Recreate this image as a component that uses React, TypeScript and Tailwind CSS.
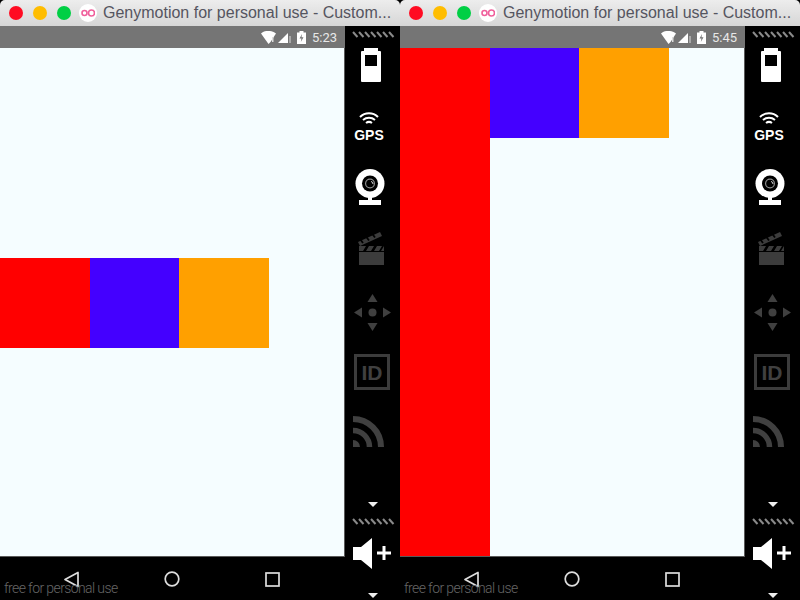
import React from 'react';

const Dots: React.FC<{ className: string }> = ({ className }) => (
  <svg className={className} width="43" height="7" viewBox="0 0 43 7">
    {[0, 6, 12, 18, 24, 30, 36].map((x) => (
      <line key={x} x1={x + 1} y1="1" x2={x + 5.5} y2="6" stroke="#8a8a8a" strokeWidth="2" />
    ))}
  </svg>
);

const Caret: React.FC<{ className: string }> = ({ className }) => (
  <svg className={className} width="10" height="5" viewBox="0 0 10 5">
    <path d="M0 0h10L5 5z" fill="#eee" />
  </svg>
);

const Sidebar: React.FC = () => (
  <div className="w-[55px] bg-black flex flex-col shrink-0">
    <Dots className="block mt-[5px] ml-[7px]" />
    {/* Battery */}
    <svg className="block mt-[10px] ml-[16px]" width="20" height="34" viewBox="0 0 20 34">
      <path d="M3 0h14v3h2a1 1 0 0 1 1 1v29a1 1 0 0 1-1 1H1a1 1 0 0 1-1-1V4a1 1 0 0 1 1-1h2z" fill="#fff" />
      <rect x="4" y="7" width="12" height="11" fill="#000" />
    </svg>
    {/* GPS */}
    <div className="mt-[30px] ml-[8px] w-[32px] flex flex-col items-center">
      <svg className="block" width="20" height="13" viewBox="0 0 20 13" fill="none" stroke="#fff" strokeWidth="2">
        <path d="M1 5c5-5 13-5 18 0" />
        <path d="M4 8c3.500-3 8.500-3 12 0" />
        <path d="M7 11c2-1.500 4-1.500 6 0" />
      </svg>
      <span className="font-['Liberation_Sans',sans-serif] font-bold text-white text-[14px] leading-[14px] mt-[3px]">GPS</span>
    </div>
    {/* Webcam */}
    <svg className="block mt-[27px] ml-[10px]" width="30" height="36" viewBox="0 0 30 36">
      <circle cx="15" cy="14.500" r="14.500" fill="#fff" />
      <circle cx="15" cy="14.500" r="8" fill="#000" />
      <circle cx="15" cy="14.500" r="5" fill="#8c8c8c" />
      <circle cx="15" cy="14.500" r="3.800" fill="#000" />
      <path d="M16 12.500a2.500 2.500 0 0 1 2 2.500" fill="none" stroke="#ddd" strokeWidth="1" />
      <rect x="13" y="28" width="4" height="4" fill="#fff" />
      <rect x="4" y="31" width="22" height="5" fill="#fff" />
    </svg>
    {/* Clapper */}
    <svg className="block mt-[27px] ml-[12px]" width="28" height="33" viewBox="0 0 28 33">
      <path d="M1 10 23 0l2 4L3 14z" fill="#3c3c3c" />
      <path d="m6 11-3-4M12 8.500 9 4.500M18 5.500l-3-4" stroke="#000" strokeWidth="1.800" />
      <path d="M2 14h25v5H2z" fill="#3c3c3c" />
      <path d="M6 19l3-5h3l-3 5zM14 19l3-5h3l-3 5zM22 19l3-5h2l-3 5z" fill="#000" />
      <path d="M2 20h25v13H2z" fill="#3c3c3c" />
    </svg>
    {/* D-pad */}
    <svg className="block mt-[29px] ml-[9px]" width="37" height="37" viewBox="0 0 37 37">
      <g fill="#404040">
        <path d="M18.500 0l5 8h-10z" />
        <path d="M18.500 37l-5-8h10z" />
        <path d="M0 18.500l8-5v10z" />
        <path d="M37 18.500l-8-5v10z" />
        <circle cx="18.500" cy="18.500" r="4" />
      </g>
    </svg>
    {/* ID */}
    <div className="mt-[23px] ml-[9px] w-[36px] h-[36px] border-[3px] border-[#3c3c3c] flex items-center justify-center">
      <span className="font-['Liberation_Sans',sans-serif] font-bold text-[#404040] text-[21px] leading-none">ID</span>
    </div>
    {/* RSS */}
    <svg className="block mt-[26px] ml-[8px]" width="32" height="31" viewBox="0 0 32 31" fill="none" stroke="#404040">
      <path d="M0 3a28 28 0 0 1 28 28" strokeWidth="6" />
      <path d="M0 14.500A16.500 16.500 0 0 1 16.500 31" strokeWidth="5.500" />
      <path d="M0 24a7 7 0 0 1 7 7H0z" fill="#404040" stroke="none" />
    </svg>
    <Caret className="block mt-[55px] ml-[23px]" />
    <Dots className="block mt-[11px] ml-[7px]" />
    {/* Volume up */}
    <svg className="block mt-[13px] ml-[8px]" width="39" height="31" viewBox="0 0 39 31">
      <path d="M0 9h8L19 0v31L8 22H0z" fill="#fff" />
      <path d="M24 13.500h5.500V8h3v5.500H38v3h-5.500V22h-3v-5.500H24z" fill="#fff" />
    </svg>
    <Caret className="block mt-[24px] ml-[23px]" />
  </div>
);

const StatusBar: React.FC<{ time: string }> = ({ time }) => (
  <div className="h-[22px] bg-[#757575] flex items-center justify-end pr-[8px] shrink-0">
    <svg width="15" height="13" viewBox="0 0 15 13">
      <path d="M0 2.500C4-1 10-1 15 2.500L9.500 11 7.500 13z" fill="#fff" />
      <rect x="11" y="6" width="1.500" height="5" fill="#ddd" />
    </svg>
    <svg className="ml-[2px]" width="13" height="12" viewBox="0 0 13 12">
      <path d="M0 12 10 2v10z" fill="#fff" />
      <rect x="11.500" y="5" width="1" height="7" fill="#ddd" />
    </svg>
    <svg className="ml-[6px]" width="9" height="13" viewBox="0 0 9 13">
      <path d="M2.500 0h4v1.500H9V13H0V1.500h2.500z" fill="#fff" />
      <path d="M5 3 2.500 7.500h2L3.800 11 6.500 6.300h-2z" fill="#757575" />
    </svg>
    <span className="ml-[6px] font-['Roboto',sans-serif] text-[13px] text-[#e8e8e8] leading-none">{time}</span>
  </div>
);

const NavBar: React.FC = () => (
  <div className="relative h-[43px] bg-black shrink-0">
    <div className="h-full flex items-center pt-[1px]">
      <svg className="ml-[63px]" width="17" height="17" viewBox="0 0 17 17" fill="none" stroke="#ddd" strokeWidth="1.700">
        <path d="M15 1.500v14L2 8.500z" strokeLinejoin="round" />
      </svg>
      <svg className="ml-[84px]" width="16" height="16" viewBox="0 0 16 16" fill="none" stroke="#ddd" strokeWidth="1.700">
        <circle cx="8" cy="8" r="6.800" />
      </svg>
      <svg className="ml-[85px]" width="15" height="15" viewBox="0 0 15 15" fill="none" stroke="#ddd" strokeWidth="1.700">
        <rect x="1" y="1" width="13" height="13" />
      </svg>
    </div>
    <span className="absolute left-[4px] bottom-[5px] font-['Roboto',sans-serif] font-light text-[14px] tracking-[-0.6px] leading-none text-[#666666]">
      free for personal use
    </span>
  </div>
);

const Box: React.FC<{ className: string }> = ({ className }) => (
  <div className={`w-[89.6px] h-[89.6px] ${className}`} />
);

const GenyWindow: React.FC<{ time: string; children: React.ReactNode }> = ({ time, children }) => (
  <div className="w-[400px] h-[600px] flex flex-col overflow-hidden rounded-t-[5px] bg-black">
    {/* Title bar */}
    <div className="h-[26px] shrink-0 bg-gradient-to-b from-[#ededed] to-[#d6d6d6] flex items-center pl-[9px]">
      <div className="w-[14px] h-[14px] rounded-full bg-[#ff0b22]" />
      <div className="w-[14px] h-[14px] rounded-full bg-[#ffbd00] ml-[10px]" />
      <div className="w-[14px] h-[14px] rounded-full bg-[#00cf44] ml-[10px]" />
      <div className="w-[18px] h-[18px] rounded-full bg-white ml-[8px] flex items-center justify-center">
        <svg width="14" height="8" viewBox="0 0 14 8" fill="none" stroke="#f0609c" strokeWidth="1.600">
          <circle cx="3.500" cy="4" r="2.500" />
          <circle cx="10.500" cy="4" r="3" />
        </svg>
      </div>
      <span className="ml-[6px] font-['Liberation_Sans',sans-serif] text-[16px] text-[#555560] whitespace-nowrap">
        Genymotion for personal use - Custom...
      </span>
    </div>
    <div className="flex-1 flex min-h-0">
      <div className="w-[345px] flex flex-col shrink-0">
        <StatusBar time={time} />
        <div className="flex-1 flex bg-[#f5fdff] border-r border-[#5a5a5a] border-b min-h-0">{children}</div>
        <NavBar />
      </div>
      <Sidebar />
    </div>
  </div>
);

const App: React.FC = () => {
  return (
    <div className="w-[800px] h-[600px] flex overflow-hidden bg-black">
      <GenyWindow time="5:23">
        <div className="flex items-center pt-[2px]">
          <Box className="bg-[#ff0000]" />
          <Box className="bg-[#4400ff]" />
          <Box className="bg-[#ffa000]" />
        </div>
      </GenyWindow>
      <GenyWindow time="5:45">
        <div className="flex items-start">
          <div className="w-[89.6px] self-stretch bg-[#ff0000]" />
          <Box className="bg-[#4400ff]" />
          <Box className="bg-[#ffa000]" />
        </div>
      </GenyWindow>
    </div>
  );
};

export default App;
